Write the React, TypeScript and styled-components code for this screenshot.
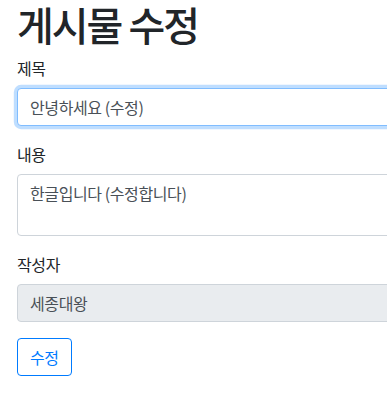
import styled, { createGlobalStyle } from "styled-components";

const GlobalStyle = createGlobalStyle`
  body {
    margin: 0;
    overflow: hidden;
    background: #fff;
    font-family: "Noto Sans CJK KR", "Noto Sans", sans-serif;
    color: #212529;
  }
`;

const App = () => {
  return (
    <SPage>
      <GlobalStyle />
      <STitle>게시물 수정</STitle>
      <SFormGroup>
        <SLabel>제목</SLabel>
        <SInput defaultValue="안녕하세요 (수정)" $focused />
      </SFormGroup>
      <SFormGroup>
        <SLabel>내용</SLabel>
        <STextarea rows={2} defaultValue="한글입니다 (수정합니다)" />
      </SFormGroup>
      <SFormGroup>
        <SLabel>작성자</SLabel>
        <SInput defaultValue="세종대왕" readOnly />
      </SFormGroup>
      <SButton>수정</SButton>
    </SPage>
  );
};

const SPage = styled.div`
  width: 420px;
  padding: 0 0 0 17px;
`;

const STitle = styled.h1`
  margin: 0 0 8px;
  font-size: 40px;
  line-height: 48px;
  font-weight: 500;
  letter-spacing: -2px;
  color: #212529;
`;

const SFormGroup = styled.div`
  display: flex;
  flex-direction: column;
  margin-bottom: 16px;
`;

const SLabel = styled.label`
  font-size: 16px;
  line-height: 24px;
  letter-spacing: -0.4px;
  margin-bottom: 8px;
  color: #212529;
`;

const SInput = styled.input<{ $focused?: boolean }>`
  box-sizing: border-box;
  height: 38px;
  width: 100%;
  padding: 6px 12px;
  font: inherit;
  font-size: 16px;
  line-height: 24px;
  letter-spacing: -0.4px;
  color: #495057;
  background: ${(p) => (p.readOnly ? "#e9ecef" : "#fff")};
  border: 1px solid ${(p) => (p.$focused ? "#80bdff" : "#ced4da")};
  border-radius: 4px;
  outline: none;
  box-shadow: ${(p) => (p.$focused ? "0 0 0 3.2px rgba(0, 123, 255, 0.25)" : "none")};
`;

const STextarea = styled.textarea`
  box-sizing: border-box;
  height: 62px;
  width: 100%;
  padding: 6px 12px;
  font: inherit;
  font-size: 16px;
  line-height: 24px;
  letter-spacing: -0.4px;
  color: #495057;
  background: #fff;
  border: 1px solid #ced4da;
  border-radius: 4px;
  outline: none;
  resize: none;
  overflow: hidden;
`;

const SButton = styled.button`
  box-sizing: border-box;
  height: 38px;
  padding: 6px 12px;
  font: inherit;
  font-size: 16px;
  line-height: 24px;
  letter-spacing: -0.4px;
  color: #007bff;
  background: #fff;
  border: 1px solid #007bff;
  border-radius: 4px;
`;

export default App;
